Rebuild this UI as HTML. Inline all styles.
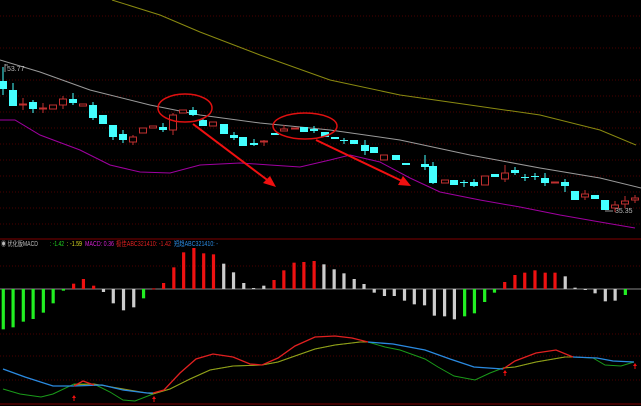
<!DOCTYPE html>
<html><head><meta charset="utf-8"><style>
html,body{margin:0;padding:0;background:#000;width:641px;height:406px;overflow:hidden}
svg{display:block}
text{font-family:"Liberation Sans","Noto Sans CJK SC",sans-serif;font-size:7px}
</style></head><body>
<svg id="s" width="641" height="406" viewBox="0 0 641 406" xmlns="http://www.w3.org/2000/svg">
<rect width="641" height="406" fill="#000"/>
<g stroke="#4a0000" stroke-width="1" stroke-dasharray="1,2">
<line x1="0" y1="16" x2="641" y2="16"/><line x1="0" y1="48" x2="641" y2="48"/><line x1="0" y1="80" x2="641" y2="80"/>
<line x1="0" y1="96" x2="641" y2="96"/><line x1="0" y1="112" x2="641" y2="112"/><line x1="0" y1="128" x2="641" y2="128"/>
<line x1="0" y1="144" x2="641" y2="144"/><line x1="0" y1="160" x2="641" y2="160"/><line x1="0" y1="176" x2="641" y2="176"/>
<line x1="0" y1="192" x2="641" y2="192"/><line x1="0" y1="208" x2="641" y2="208"/><line x1="0" y1="224" x2="641" y2="224"/>
<line x1="0" y1="266" x2="641" y2="266"/><line x1="0" y1="334" x2="641" y2="334"/><line x1="0" y1="356" x2="641" y2="356"/><line x1="0" y1="380" x2="641" y2="380"/>
</g>
<polyline fill="none" stroke="#8a8a10" stroke-width="1" points="112,0 160,15 200,32 260,55 330,80 400,95 470,105 540,115 600,130 636,145"/>
<polyline fill="none" stroke="#9a9a9a" stroke-width="1" points="0,60 40,72 90,90 150,105 200,115 260,123 330,130 400,140 470,155 540,168 600,178 641,188"/>
<polyline fill="none" stroke="#a000a0" stroke-width="1" points="0,120 15,120 40,135 80,150 110,165 140,172 170,173 200,165 240,163 270,165 300,167 330,160 350,155 380,162 410,178 440,192 480,200 520,207 560,215 600,222 635,228"/>
<g id="c"></g>
<text x="7" y="71" fill="#bbb" font-size="6">53.77</text>
<line x1="5" y1="64" x2="5" y2="72" stroke="#bbb" stroke-width="0.8"/><line x1="5" y1="65" x2="8" y2="65" stroke="#bbb" stroke-width="0.8"/>
<text x="615" y="213" fill="#bbb" font-size="6">35.35</text>
<line x1="605" y1="211" x2="613" y2="211" stroke="#bbb" stroke-width="0.8"/>
<ellipse cx="185" cy="108" rx="27" ry="14" fill="none" stroke="#e01010" stroke-width="1.5"/>
<ellipse cx="305" cy="126" rx="32" ry="13" fill="none" stroke="#e01010" stroke-width="1.5"/>
<line x1="193" y1="124" x2="270" y2="182" stroke="#f01010" stroke-width="2"/><polygon points="276,187 263,183 270,176" fill="#f01010"/>
<line x1="316" y1="140" x2="404" y2="182" stroke="#f01010" stroke-width="2"/><polygon points="411,186 398,185 403,176" fill="#f01010"/>
<line x1="0" y1="239" x2="641" y2="239" stroke="#800000" stroke-width="1"/>
<line x1="0" y1="404" x2="641" y2="404" stroke="#800000" stroke-width="1"/>
<line x1="0" y1="289" x2="641" y2="289" stroke="#888" stroke-width="1"/>
<g id="m"></g>
<polyline fill="none" stroke="#1a9a1a" stroke-width="1" points="3,389 20,394 41,397 53,394 74,384 94,384 110,392 123,400 135,401 153,394 170,389 190,379 210,370 233,366 262,365 278,362 295,356 315,349 335,345 360,342 368,342 385,347 400,350 425,359 438,367 454,376 475,380 490,373 503,368 515,367 536,362 565,357 573,357 593,358 605,365 621,366 634,362"/>
<polyline fill="none" stroke="#9a9a18" stroke-width="1" points="74,385 94,384 153,394 170,389 190,379 210,370 233,366 262,365 278,362 295,356 315,349 335,345 360,342 368,342"/>
<polyline fill="none" stroke="#9a9a18" stroke-width="1" points="503,368 515,367 536,362 565,357 573,357"/>
<polyline fill="none" stroke="#2a8ae0" stroke-width="1.3" points="3,369 25,377 53,386 74,386 102,385 123,390 147,393 153,393"/>
<polyline fill="none" stroke="#e02020" stroke-width="1.3" points="74,386 83,381 94,385"/>
<polyline fill="none" stroke="#e02020" stroke-width="1.3" points="153,393 164,390 180,373 196,359 213,354 233,357 250,364 262,365 278,358 295,346 315,337 335,336 352,338 368,342"/>
<polyline fill="none" stroke="#2a8ae0" stroke-width="1.3" points="368,342 393,344 425,350 450,359 474,367 503,369"/>
<polyline fill="none" stroke="#e02020" stroke-width="1.3" points="503,369 515,361 536,353 556,350 573,357"/>
<polyline fill="none" stroke="#2a8ae0" stroke-width="1.3" points="573,357 597,358 613,361 634,362"/>
<g fill="#f01010"><path d="M74,395 l-2,3 h1.5 v3 h1 v-3 h1.5z"/><path d="M154,396 l-2,3 h1.5 v3 h1 v-3 h1.5z"/><path d="M505,370 l-2,3 h1.5 v3 h1 v-3 h1.5z"/><path d="M635,363 l-2,3 h1.5 v3 h1 v-3 h1.5z"/></g>
<g font-size="6">
<text x="1" y="246" fill="#bbb" textLength="37" lengthAdjust="spacingAndGlyphs">◉ 优化版MACD</text>
<text x="50" y="246" fill="#22dd22" textLength="14" lengthAdjust="spacingAndGlyphs">: -1.42</text>
<text x="67" y="246" fill="#dddd22" textLength="15" lengthAdjust="spacingAndGlyphs">: -1.59</text>
<text x="85" y="246" fill="#d020d0" textLength="29" lengthAdjust="spacingAndGlyphs">MACD: 0.36</text>
<text x="116" y="246" fill="#e02020" textLength="55" lengthAdjust="spacingAndGlyphs">极佳ABC321410: -1.42</text>
<text x="174" y="246" fill="#2a8ae0" textLength="44" lengthAdjust="spacingAndGlyphs">短趋ABC321410: -</text>
</g>
</svg>
<script>
var C=[[3,81,89,67,95,'c'],[13,90,106,83,106,'c'],[23,104,105,98,110,'r'],[33,102,109,100,113,'c'],[43,108,108,103,113,'r'],[53,105,109,105,109,'r'],[63,99,105,96,109,'r'],[73,99,103,93,105,'c'],[83,104,106,104,106,'r'],[93,105,118,102,120,'c'],[103,115,124,115,124,'c'],[113,125,137,125,140,'c'],[123,134,140,130,143,'c'],[133,137,142,135,145,'r'],[143,128,133,128,133,'r'],[153,126,128,126,128,'r'],[163,127,130,123,132,'c'],[173,115,130,113,135,'r'],[183,110,113,110,113,'r'],[193,110,115,107,116,'c'],[203,120,126,118,126,'c'],[213,122,126,122,126,'r'],[224,124,134,124,134,'c'],[234,135,138,132,140,'c'],[243,137,146,137,146,'c'],[254,143,145,139,146,'c'],[264,141,141,140,146,'r'],[275,133,135,133,135,'c'],[284,129,131,125,131,'r'],[295,128,129,128,129,'r'],[304,127,132,127,132,'c'],[314,129,131,126,133,'c'],[325,132,137,132,137,'c'],[335,137,139,137,139,'c'],[344,140,141,138,144,'c'],[354,140,144,140,144,'c'],[365,145,151,140,155,'c'],[374,147,153,147,153,'c'],[384,155,160,155,160,'r'],[396,155,160,155,160,'c'],[406,163,165,163,165,'c'],[425,164,167,155,170,'c'],[433,166,183,162,184,'c'],[445,180,183,180,183,'r'],[454,180,185,180,185,'c'],[464,182,182,180,187,'c'],[474,182,186,179,187,'c'],[485,176,185,176,185,'r'],[495,174,177,174,177,'c'],[505,173,179,165,182,'r'],[515,170,173,167,175,'c'],[525,177,177,174,181,'c'],[535,176,176,173,180,'c'],[545,178,183,173,186,'c'],[555,182,183,182,183,'r'],[565,182,186,179,192,'c'],[575,191,200,191,200,'c'],[585,194,197,190,200,'r'],[595,195,199,195,199,'c'],[605,200,210,200,210,'c'],[615,205,208,201,212,'r'],[625,201,204,196,208,'r'],[635,198,200,195,203,'r']];
var h='';C.forEach(function(a){var x=a[0],col=a[5]=='c'?'#44ffff':'#c03030';
h+='<line x1="'+x+'" y1="'+a[3]+'" x2="'+x+'" y2="'+a[4]+'" stroke="'+col+'" stroke-width="1"/>';
var hh=Math.max(a[2]-a[1],1);
if(a[5]=='c')h+='<rect x="'+(x-4)+'" y="'+a[1]+'" width="8" height="'+hh+'" fill="#44ffff"/>';
else h+='<rect x="'+(x-3.5)+'" y="'+a[1]+'" width="7" height="'+hh+'" fill="#000" stroke="#c03030" stroke-width="1"/>';});
document.getElementById('c').innerHTML=h;
var M=[[8,268,'g'],[32,262,'g'],[57,245,'g'],[81,237,'g'],[106,218,'g'],[130,190,'g'],[155,152,'g'],[180,131,'r'],[204,117,'r'],[229,137,'r'],[253,156,'w'],[277,190,'w'],[302,211,'w'],[327,202,'w'],[351,175,'g'],[376,145,'r'],[400,129,'r'],[425,82,'r'],[449,37,'r'],[474,24,'r'],[498,40,'r'],[522,43,'r'],[547,71,'w'],[571,97,'w'],[596,129,'w'],[620,144,'w'],[645,137,'w'],[670,120,'r'],[694,91,'r'],[719,68,'r'],[743,66,'r'],[768,63,'r'],[792,73,'w'],[817,88,'w'],[841,100,'w'],[866,117,'w'],[890,132,'w'],[915,158,'w'],[940,168,'w'],[964,168,'w'],[989,182,'w'],[1013,193,'w'],[1038,196,'w'],[1062,227,'w'],[1087,229,'w'],[1111,238,'w'],[1136,229,'g'],[1160,220,'g'],[1185,186,'g'],[1209,158,'g'],[1234,126,'r'],[1259,105,'r'],[1283,98,'r'],[1308,91,'r'],[1333,98,'r'],[1357,98,'r'],[1382,109,'w'],[1406,143,'w'],[1431,149,'w'],[1455,160,'w'],[1480,184,'w'],[1504,182,'w'],[1529,165,'g']];
var k='';M.forEach(function(a){var x=a[0]*0.409,y=a[1]/3+240,col={g:'#22ee22',r:'#ee1111',w:'#cccccc'}[a[2]];
var t=Math.min(y,289),b=Math.max(y,289);k+='<rect x="'+(x-1.6)+'" y="'+t+'" width="3.2" height="'+Math.max(b-t,1)+'" fill="'+col+'"/>';});
document.getElementById('m').innerHTML=k;
</script>
</body></html>
